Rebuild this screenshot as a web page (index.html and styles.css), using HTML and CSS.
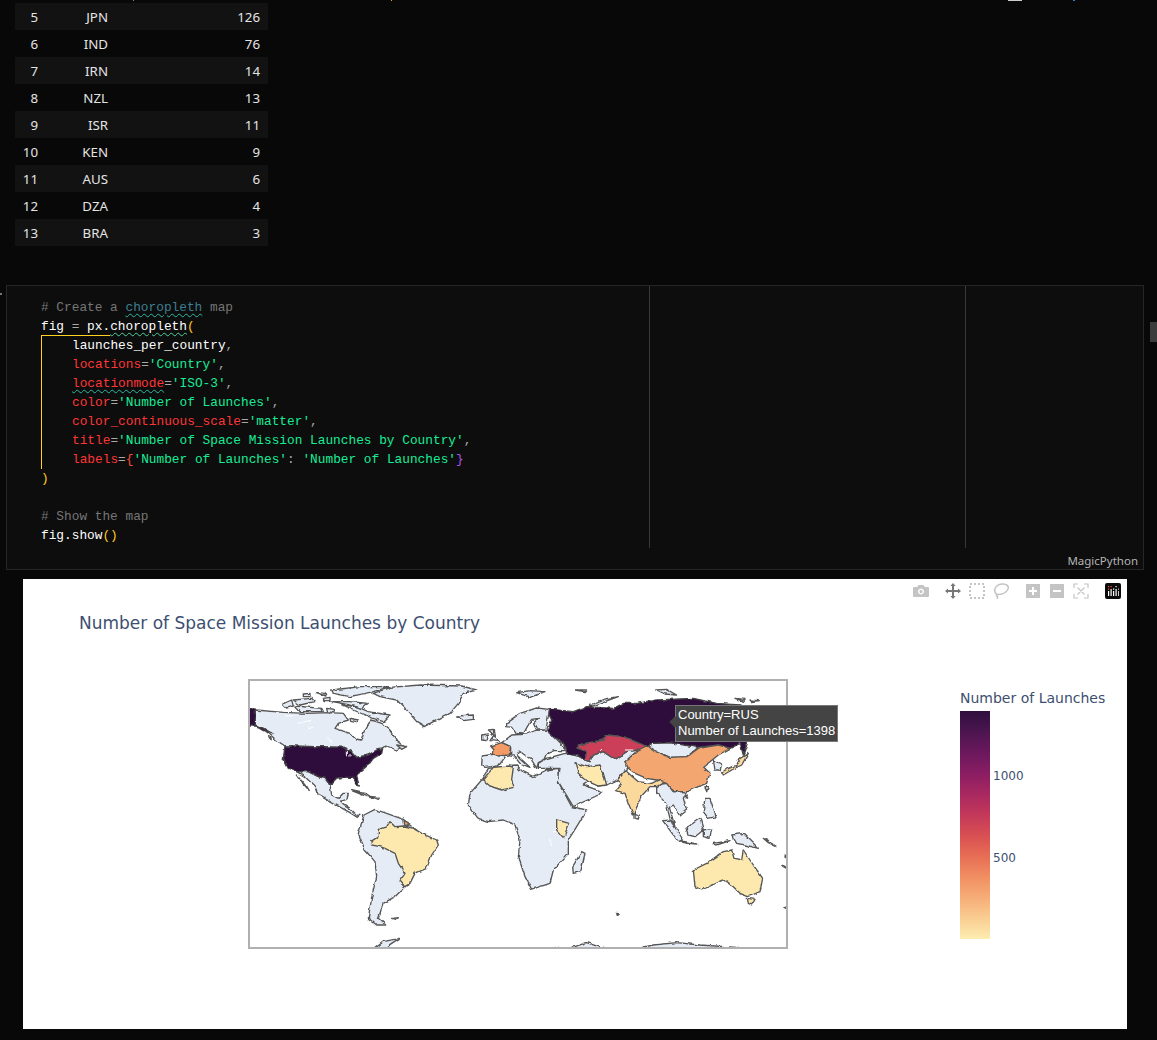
FILE: index.html
```html
<!DOCTYPE html>
<html lang="en">
<head>
  <meta charset="UTF-8">
  <title>Space Mission Launches</title>
  <meta name="viewport" content="width=device-width, initial-scale=1.0">
  <link rel="stylesheet" href="styles.css">
</head>
<body>
  <!-- bits of the cell scrolled off above -->
  <span class="clip-mark clip-a"></span>
  <span class="clip-mark clip-b"></span>
  <span class="clip-mark clip-c"></span>
  <span class="clip-mark clip-d"></span>

  <table class="frame">
    <tr><td>5</td><td>JPN</td><td>126</td></tr>
    <tr><td>6</td><td>IND</td><td>76</td></tr>
    <tr><td>7</td><td>IRN</td><td>14</td></tr>
    <tr><td>8</td><td>NZL</td><td>13</td></tr>
    <tr><td>9</td><td>ISR</td><td>11</td></tr>
    <tr><td>10</td><td>KEN</td><td>9</td></tr>
    <tr><td>11</td><td>AUS</td><td>6</td></tr>
    <tr><td>12</td><td>DZA</td><td>4</td></tr>
    <tr><td>13</td><td>BRA</td><td>3</td></tr>
  </table>

  <span class="fold-arrow"></span>
  <span class="scroll-mark"></span>

  <div class="code-cell">
    <span class="ruler ruler-a"></span>
    <span class="ruler ruler-b"></span>
    <div class="code">
      <div class="ln cm"># Create a <span class="squiggle-teal">choropleth</span> map</div>
      <div class="ln">fig <span class="op">=</span> px.<span class="squiggle-fn">choropleth</span><span class="par">(</span></div>
      <div class="args">
        <div class="ln">launches_per_country<span class="op">,</span></div>
        <div class="ln"><span class="kw">locations</span><span class="op">=</span><span class="str">'Country'</span><span class="op">,</span></div>
        <div class="ln"><span class="kw squiggle-teal">locationmode</span><span class="op">=</span><span class="str">'ISO-3'</span><span class="op">,</span></div>
        <div class="ln"><span class="kw">color</span><span class="op">=</span><span class="str">'Number of Launches'</span><span class="op">,</span></div>
        <div class="ln"><span class="kw">color_continuous_scale</span><span class="op">=</span><span class="str">'matter'</span><span class="op">,</span></div>
        <div class="ln"><span class="kw">title</span><span class="op">=</span><span class="str">'Number of Space Mission Launches by Country'</span><span class="op">,</span></div>
        <div class="ln"><span class="kw">labels</span><span class="op">=</span><span class="brace-open">{</span><span class="str">'Number of Launches'</span><span class="op">:</span> <span class="str">'Number of Launches'</span><span class="brace-close">}</span></div>
      </div>
      <div class="ln"><span class="par">)</span></div>
      <div class="ln">&nbsp;</div>
      <div class="ln cm"># Show the map</div>
      <div class="ln">fig.show<span class="par">()</span></div>
    </div>
    <div class="lang">MagicPython</div>
  </div>

  <div class="plot">
    <div class="modebar">
      <div class="mode-group">
        <svg class="mode-icon" viewBox="0 0 16 16"><path class="btn" fill-rule="evenodd" d="M1 4h3.2l1.3-2h5l1.3 2H15q1 0 1 1v8q0 1-1 1H1q-1 0-1-1V5q0-1 1-1zM8 5.500a3 3 0 1 0 .01 0zM8 7a1.600 1.600 0 1 1-.01 0z"/></svg>
      </div>
      <div class="mode-group">
        <svg class="mode-icon" viewBox="0 0 16 16"><path class="btn-on" d="M8 0l2.600 3H9v4h4V5.400L16 8l-3 2.600V9H9v4h1.600L8 16l-2.600-3H7V9H3v1.600L0 8l3-2.600V7h4V3H5.400z"/></svg>
        <svg class="mode-icon" viewBox="0 0 16 16"><rect class="btn-line dashed" x="1" y="1" width="14" height="14"/></svg>
        <svg class="mode-icon" viewBox="0 0 16 16"><path class="btn-line" d="M4 11.500C0 9 1 2 9 1c5-.5 7 2.500 6 5-1.500 3.500-6 5.500-10 5.500zM4 11c-1 1-1 2 .5 2.500L4.500 16"/></svg>
      </div>
      <div class="mode-group">
        <svg class="mode-icon" viewBox="0 0 16 16"><path class="btn" fill-rule="evenodd" d="M1 1h14v14H1zM7 4v3H4v2h3v3h2V9h3V7H9V4z"/></svg>
        <svg class="mode-icon" viewBox="0 0 16 16"><path class="btn" fill-rule="evenodd" d="M1 1h14v14H1zM4 7v2h8V7z"/></svg>
        <svg class="mode-icon" viewBox="0 0 16 16"><path class="btn-line thin" d="M1 5V1h4M11 1h4v4M15 11v4h-4M5 15H1v-4M4.500 4.500l7 7M11.500 4.500l-7 7"/></svg>
      </div>
      <div class="mode-group">
        <svg class="mode-icon" viewBox="0 0 16 16">
          <rect width="16" height="16" rx="2" fill="#0b0b0b"/>
          <path d="M3 8h1.200v5H3zM5.500 6h1.200v7H5.500zM8 8h1.200v5H8zM10.500 6h1.200v7h-1.200zM13 8h.8v5H13z" fill="#fff"/>
          <path d="M3 3h1.200v1.200H3zM3 5.500h1.200v1.200H3zM5.500 3h1.200v1.200H5.500z" fill="#ef553b"/>
          <path d="M8 5.500h1.200v1.200H8zM10.500 3h1.200v1.200h-1.200zM13 5.500h.8v1.200H13z" fill="#fff"/>
        </svg>
      </div>
    </div>

    <div class="plot-title">Number of Space Mission Launches by Country</div>

    <div class="chart-row">
      <div class="map-frame">
        <svg class="map" viewBox="250 681 536 266">
          <defs>
            <!-- roughens the hand-traced coastlines -->
            <filter id="coast" x="-2%" y="-2%" width="104%" height="104%">
              <feTurbulence type="fractalNoise" baseFrequency="0.16" numOctaves="2" seed="4"/>
              <feDisplacementMap in="SourceGraphic" scale="3.500" xChannelSelector="R" yChannelSelector="G"/>
              <feGaussianBlur stdDeviation="0.3"/>
            </filter>
          </defs>
          <g filter="url(#coast)">
          <!-- Americas, traced in 3x units from the left half -->
          <g transform="translate(240 670) scale(.33333)">
            <path class="land" d="M46,120 L130,127 200,130 268,128 310,130 325,150 295,160 285,175 330,190 350,210 362,213 372,185 385,162 395,150 425,160 450,180 470,212 490,228 470,240 440,228 425,238 405,245 385,255 350,262 335,245 310,232 135,228 115,215 85,190 70,175 46,165Z"/>
            <path class="land" d="M470,225 L500,230 485,238Z"/>
            <path class="land" d="M170,305 L205,305 235,320 255,325 270,345 275,375 295,385 310,370 325,370 320,388 300,395 330,415 350,435 360,436 352,442 330,428 270,395 235,375 225,350 195,320Z"/>
            <path class="land" d="M172,315 L198,345 208,362 190,342Z"/>
            <path class="land" d="M372,435 L405,418 440,430 490,448 505,462 530,480 520,560 495,650 465,680 430,700 415,745 437,765 410,765 385,745 395,680 410,620 405,575 375,540 355,490Z"/>
            <path class="us" d="M135,228 L310,232 335,245 350,262 385,255 410,240 428,236 425,250 400,265 385,285 360,305 350,320 358,348 350,345 340,322 310,322 290,325 270,345 255,325 235,320 205,305 170,305 145,295 130,265Z"/>
            <path class="us" d="M24,117 L46,117 46,165 70,175 100,192 70,182 46,168 24,168Z"/>
            <path class="brazil" d="M392,515 L415,500 415,478 440,470 450,455 465,470 495,468 520,475 545,490 590,510 595,525 575,555 560,595 525,610 510,640 495,650 480,633 495,610 475,580 465,550 435,535 420,530 395,525Z"/>
            <path class="france" d="M492,452 L505,458 503,467 494,465Z"/>
            <path class="land" d="M335,362 L380,372 400,385 360,372Z M395,380 L420,382 415,388Z M458,745 L475,743 470,749Z M86,200 L94,204 92,208Z"/>
            <path class="land" d="M405,835 L430,815 478,805 440,830 425,838Z"/>
            <path class="lake" d="M322,240V262M330,250V260M135,138H165M170,160L210,152M262,200L275,218M205,172H220"/>
          </g>

          <!-- arctic islands and Greenland -->
          <g transform="translate(250 680) scale(.33333)">
            <path class="land" d="M370,40 L420,22 510,15 635,18 680,30 640,40 625,70 600,100 525,140 500,125 470,90 440,60 390,50Z"/>
            <path class="land" d="M620,108 L670,105 670,118 640,122Z"/>
            <path class="land" d="M130,60 L185,55 195,65 150,75Z M98,72 L125,60 130,78 110,84Z M160,42 L180,40 180,50 160,50Z M200,38 L225,40 228,48Z M220,55 L240,52 240,62 222,62Z M245,30 L330,20 420,20 370,35 300,50 250,40Z M245,65 L300,65 355,70 335,85 300,75Z M135,78 L215,85 220,95 150,95Z M275,75 L320,80 355,95 420,105 400,125 370,115 345,105Z M230,85 L255,88 250,98 232,95Z M300,115 L325,120 320,128 302,124Z"/>
          </g>

          <!-- Africa and Asia, traced in 3x units from the right half -->
          <g transform="translate(510 670) scale(.33333)">
            <path class="land" d="M-65,295 L-85,330 -120,370 -125,405 -95,445 -65,455 -20,450 15,465 30,510 25,560 45,620 65,658 120,640 130,600 175,550 175,510 200,470 230,420 185,410 145,335 150,325 145,295 110,300 70,320 30,300 20,288 -40,292Z"/>
            <path class="land" d="M215,545 L225,550 212,605 190,610 188,590Z"/>
            <path class="land" d="M105,267 L165,250 205,258 225,270 240,275 250,255 280,245 315,268 350,245 385,240 345,275 355,295 345,300 322,330 290,345 280,345 265,348 235,335 220,345 275,365 265,375 190,410 145,335 150,295 85,295 85,280Z"/>
            <path class="land" d="M425,220 L480,218 565,232 530,260 480,262 430,240Z"/>
            <path class="land" d="M440,345 L470,340 490,365 530,365 520,385 530,420 510,435 490,405 478,412 495,470 480,445 468,400 440,370Z"/>
            <path class="land" d="M610,270 L635,285 630,300 615,300Z M458,452 L480,450 520,510 505,515Z M510,512 L560,522 530,520Z M528,475 L570,445 580,480 555,500 535,495Z M580,480 L605,475 600,505 580,500Z M585,385 L600,385 618,440 595,445 580,425Z M665,495 L700,490 745,535 705,525 680,520Z M585,350 L595,350 590,365Z M375,430 L388,435 385,447 375,445Z M760,505 L800,530 775,518Z M610,520 L660,512 620,525Z M320,730 L328,732 322,737Z"/>
            <path class="land" d="M240,105 L280,88 325,80 270,100 235,112Z M440,60 L470,58 500,75 465,72Z M195,60 L230,60 225,65Z M20,68 L60,62 105,65 60,82Z M675,85 L705,88 700,94Z M720,90 L745,92 725,95Z"/>
            <path class="land" d="M170,838 L230,818 290,838Z M370,838 L430,825 500,818 570,825 770,838Z M135,832 L155,838 130,838Z"/>
            <path class="us" d="M110,120 L125,118 190,125 230,110 310,115 340,100 380,100 440,90 550,85 620,100 690,105 770,125 770,150 715,165 712,220 700,255 690,220 660,235 625,225 565,232 480,218 425,220 410,230 340,200 290,195 280,210 205,225 205,235 230,245 225,270 205,258 170,250 165,225 135,205 110,185 125,150Z"/>
            <path class="kazakh" d="M205,225 L280,210 290,195 340,200 410,230 385,240 350,245 315,268 280,245 250,255 240,275 225,270 230,245 205,235Z"/>
            <path class="china" d="M345,275 L385,240 415,225 430,240 480,262 530,260 565,235 625,225 660,235 625,255 600,275 580,290 600,310 590,340 565,350 530,365 490,365 470,340 440,330 410,325 375,310 355,295Z"/>
            <path class="india" d="M345,300 L365,318 385,335 425,340 445,330 465,335 440,350 420,350 395,378 370,435 355,400 345,370 320,362 335,340 322,330Z"/>
            <path class="iran" d="M195,278 L230,290 270,285 280,310 290,345 265,348 235,335 205,310Z"/>
            <path class="india" d="M690,265 L715,250 695,285 665,300 640,315 635,305 680,285Z"/>
            <path class="iran" d="M140,450 L178,460 165,495 160,503 140,480Z"/>
            <path class="iran" d="M550,600 L590,580 640,545 665,540 672,565 695,570 700,540 730,585 758,625 750,665 715,680 690,670 670,650 640,630 575,660 555,650Z"/>
            <path class="iran" d="M712,685 L735,688 725,705 715,700Z"/>
            <path class="france" d="M825,712 L838,708 838,718Z M525,378 L535,375 532,385Z"/>
            <path class="land" d="M815,585 L830,595 820,590Z M825,555 L832,565 826,562Z"/>
            <path class="lake" d="M132,484H138M118,505L125,525M345,240H370M270,242L276,238"/>
          </g>

          <!-- Europe -->
          <g transform="translate(470 680) scale(.33333)">
            <path class="land" d="M122,200 L95,188 125,165 170,162 200,150 228,150 285,205 285,212 255,212 232,222 225,238 205,248 200,265 185,240 160,222 148,212 140,225 180,262 150,250 130,225 122,225Z"/>
            <path class="land" d="M110,128 L150,100 200,84 238,88 228,150 200,150 190,130 205,115 185,118 172,140 160,162 140,160 128,142 110,140Z"/>
            <path class="land" d="M37,228 L75,222 105,232 85,258 45,262 35,255Z"/>
            <path class="land" d="M55,150 L70,148 75,175 88,185 60,182 72,165Z M35,168 L55,165 50,182 35,180Z"/>
            <path class="france" d="M62,198 L95,188 122,200 118,225 85,228 70,222 72,210Z"/>
            <path class="iran" d="M38,300 L70,262 118,258 130,262 125,298 132,322 95,330 60,318Z"/>
          </g>
          </g>
        </svg>
      </div>

      <div class="colorbar">
        <div class="colorbar-title">Number of Launches</div>
        <div class="colorbar-bar">
          <span class="tick tick-1000">1000</span>
          <span class="tick tick-500">500</span>
        </div>
      </div>
    </div>

    <div class="tooltip">
      <div>Country=RUS</div>
      <div>Number of Launches=1398</div>
    </div>
  </div>
</body>
</html>
```

FILE: styles.css
```css
html, body {
  height: 100%;
}
body {
  margin: 0;
  height: 1040px;
  overflow: hidden;
  position: relative;
  background-color: #080808;
  font-family: "Noto Sans", sans-serif;
}

/* Clipped pixels along the top edge */
.clip-mark {
  position: absolute;
  top: 0;
  height: 1px;
}
.clip-a { left: 133px; width: 1px; background: #888; }
.clip-b { left: 391px; width: 1px; background: #e0a030; }
.clip-c { left: 1008px; width: 14px; background: #ccc; }
.clip-d { left: 1073px; width: 2px; background: #3a7bd0; }

/* Dataframe output */
.frame {
  border-collapse: collapse;
  table-layout: fixed;
  width: 253px;
  margin: 3px 0 0 15px;
  font-size: 13.300px;
  color: #e4e4e4;
}
.frame tr {
  height: 27px;
}
.frame tr:nth-child(odd) {
  background-color: #121212;
}
.frame td {
  padding: 0 8px 0 0;
  text-align: right;
}
.frame td:nth-child(1) { width: 23px; }
.frame td:nth-child(2) { width: 62px; }

.fold-arrow {
  position: absolute;
  left: 0;
  top: 293px;
  width: 2px;
  height: 2px;
  background: #777;
}
.scroll-mark {
  position: absolute;
  left: 1150px;
  top: 322px;
  width: 7px;
  height: 20px;
  background: #3c3c3c;
}

/* Code cell */
.code-cell {
  position: relative;
  box-sizing: border-box;
  width: 1138px;
  height: 285px;
  margin: 39px 0 0 6px;
  padding: 12px 0 0 34px;
  background-color: #0d0d0d;
  border: 1px solid #262626;
}
.ruler {
  position: absolute;
  top: 0;
  width: 1px;
  height: 262px;
  background: #383838;
}
.ruler-a { left: 642px; }
.ruler-b { left: 958px; }
.code {
  position: relative;
  font-family: "Liberation Mono", monospace;
  font-size: 12.800px;
  line-height: 19px;
  color: #fff;
}
.ln {
  white-space: pre;
}
.args {
  border-left: 1px solid #ffd21f;
  padding-left: 30px;
  position: relative;
}
.args::before {
  content: "";
  position: absolute;
  left: -1px;
  top: -1px;
  width: 69px;
  height: 1px;
  background: #ffd21f;
}
.cm { color: #767676; }
.kw { color: #ff3636; }
.str { color: #18ec96; }
.op { color: #a8a8a8; }
.par { color: #ffc91f; }
.brace-open { color: #ff4d3a; }
.brace-close { color: #b050f0; }
.squiggle-teal {
  text-decoration: underline wavy #2fb8a0 1px;
  text-underline-offset: 2px;
}
.cm .squiggle-teal { color: #3f7f8f; }
.squiggle-fn {
  text-decoration: underline wavy #4fd0a0 1px;
  text-underline-offset: 2px;
}
.lang {
  position: absolute;
  right: 5px;
  bottom: 0;
  font-size: 11.500px;
  line-height: 17px;
  color: #b4b4b4;
}

/* Plot output */
.plot {
  position: relative;
  box-sizing: border-box;
  width: 1104px;
  height: 450px;
  margin: 9px 0 0 23px;
  padding: 32px 0 0 56px;
  background-color: #fff;
}
.plot-title {
  font-family: "DejaVu Sans", sans-serif;
  font-size: 17px;
  line-height: 24px;
  color: #3d4f70;
}
.chart-row {
  display: flex;
  margin-top: 44px;
}
.map-frame {
  box-sizing: border-box;
  width: 540px;
  height: 270px;
  margin-left: 169px;
  border: 2px solid #b0b0b0;
  overflow: hidden;
}
.map {
  display: block;
  width: 536px;
  height: 266px;
}
.land, .us, .kazakh, .china, .india, .iran, .brazil, .france {
  stroke: #555;
  stroke-width: 4;
  stroke-linejoin: round;
}
.land { fill: #e5ecf6; }
.us { fill: #2f0f3d; stroke: #444; }
.kazakh { fill: #cb4059; }
.china { fill: #f4a66f; }
.france { fill: #f39b65; }
.india { fill: #fbd89c; }
.iran, .brazil { fill: #fde9ae; }
.lake {
  fill: none;
  stroke: #fff;
  stroke-width: 3;
}

.colorbar {
  margin-left: 172px;
}
.colorbar-title {
  margin-top: 7px;
  font-family: "DejaVu Sans", sans-serif;
  font-size: 14px;
  line-height: 24px;
  color: #3d4f70;
  white-space: nowrap;
}
.colorbar-bar {
  position: relative;
  width: 30px;
  height: 228px;
  margin-top: 1px;
  background: linear-gradient(to bottom, #2f0f3d, #4c1550, #6b185d, #8a1d63, #a82860, #c3385a, #d85053, #e76d54, #f08e62, #f6ad77, #facd91, #fdedb0);
}
.tick {
  position: absolute;
  left: 33px;
  font-family: "DejaVu Sans", sans-serif;
  font-size: 12px;
  line-height: 14px;
  color: #3d4f70;
}
.tick-1000 { top: 58px; }
.tick-500 { top: 140px; }

/* Modebar */
.modebar {
  position: absolute;
  top: 4px;
  right: 6px;
  display: flex;
  gap: 16px;
}
.mode-group {
  display: flex;
  gap: 8px;
}
.mode-icon {
  display: block;
  width: 16px;
  height: 16px;
}
.btn { fill: #c4c4c4; }
.btn-on { fill: #777; }
.btn-line {
  fill: none;
  stroke: #c4c4c4;
  stroke-width: 1.500;
}
.btn-line.dashed {
  stroke-width: 2;
  stroke-dasharray: 2 2;
}
.btn-line.thin {
  stroke-width: 1.200;
}

/* Hover label */
.tooltip {
  position: absolute;
  left: 652px;
  top: 126px;
  box-sizing: border-box;
  width: 163px;
  height: 37px;
  padding: 1px 0 0 2px;
  background-color: #444;
  border: 1px solid #777;
  font-family: "Liberation Sans", sans-serif;
  font-size: 13px;
  line-height: 16px;
  color: #fff;
  white-space: nowrap;
}
.tooltip::before {
  content: "";
  position: absolute;
  left: -5px;
  top: 12px;
  width: 8px;
  height: 8px;
  background-color: #444;
  transform: rotate(45deg);
}
```
